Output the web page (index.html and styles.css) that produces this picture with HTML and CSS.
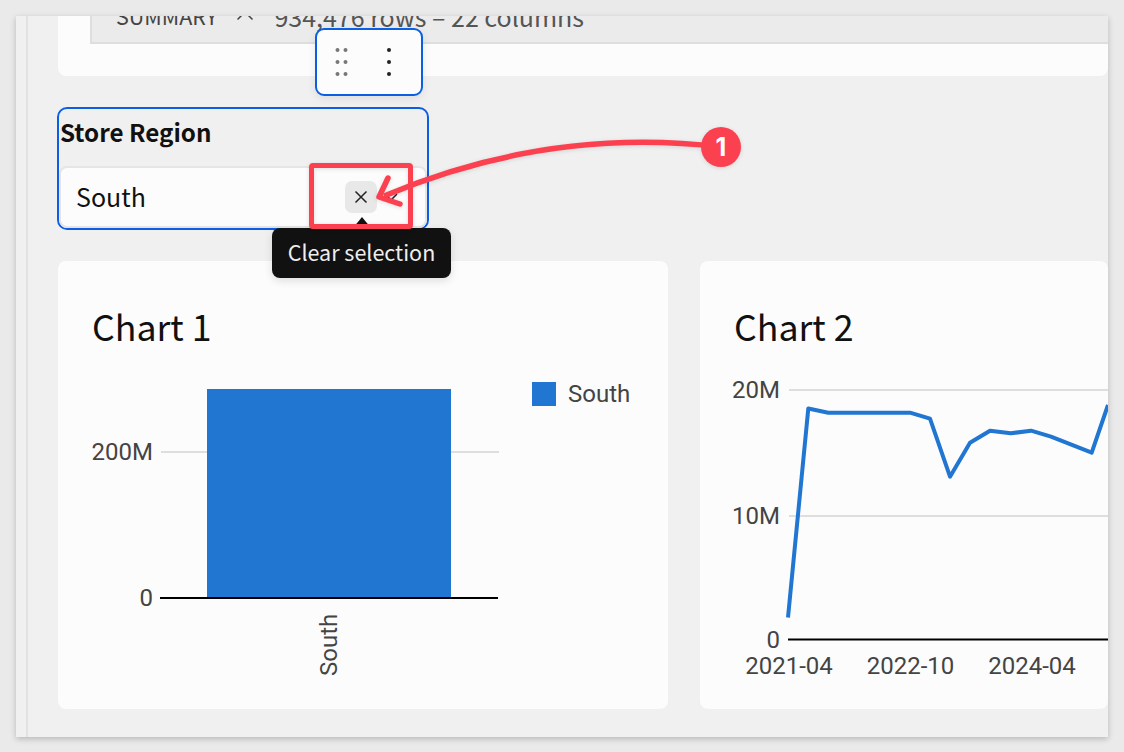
FILE: index.html
```html
<!DOCTYPE html>
<html lang="en">
<head>
<meta charset="utf-8">
<title>Store Region</title>
<link rel="stylesheet" href="styles.css">
</head>
<body>
<div class="window">
  <div class="rail"></div>
  <main class="content">
    <section class="table-card">
      <div class="table-foot">
        <span class="foot-name">SUMMARY</span>
        <svg class="foot-icon" width="16" height="10" viewBox="0 0 16 10"><path d="M0.500 8.500 8 1 15.500 8.500" fill="none" stroke="#444" stroke-width="1.500"/></svg>
        <span class="foot-info">934,476 rows – 22 columns</span>
      </div>
    </section>

    <section class="filter">
      <div class="filter-label">Store Region</div>
      <div class="filter-input">
        <span class="filter-value">South</span>
        <span class="clear-btn">
          <svg width="14" height="14" viewBox="0 0 14 14"><path d="M1.500 1.500 12.500 12.500 M12.500 1.500 1.500 12.500" fill="none" stroke="#222" stroke-width="1.500"/></svg>
        </span>
        <svg class="chevron" width="14" height="8" viewBox="0 0 14 8"><path d="M1 1 7 7 13 1" fill="none" stroke="#222" stroke-width="1.500"/></svg>
      </div>
    </section>

    <section class="charts">
      <article class="chart-card chart-one">
        <h2 class="chart-title">Chart 1</h2>
        <svg class="chart-svg" viewBox="58 353 610 356" preserveAspectRatio="xMinYMin slice">
          <line class="grid" x1="161" y1="452" x2="499" y2="452"/>
          <rect class="bar" x="207" y="389" width="244" height="209"/>
          <line class="axis" x1="160" y1="598" x2="498" y2="598"/>
          <text class="tick end" x="153" y="460">200M</text>
          <text class="tick end" x="153" y="606">0</text>
          <text class="tick" transform="translate(337 676) rotate(-90)">South</text>
          <rect class="bar" x="532" y="382" width="24" height="24"/>
          <text class="tick" x="568" y="402">South</text>
        </svg>
      </article>
      <article class="chart-card chart-two">
        <h2 class="chart-title">Chart 2</h2>
        <svg class="chart-svg" viewBox="700 353 408 356" preserveAspectRatio="xMinYMin slice">
          <line class="grid" x1="789" y1="390" x2="1108" y2="390"/>
          <line class="grid" x1="789" y1="516" x2="1108" y2="516"/>
          <line class="axis" x1="788" y1="639.500" x2="1108" y2="639.500"/>
          <text class="tick end" x="780" y="398">20M</text>
          <text class="tick end" x="780" y="524">10M</text>
          <text class="tick end" x="780" y="648">0</text>
          <text class="tick mid" x="789" y="674">2021-04</text>
          <text class="tick mid" x="910.500" y="674">2022-10</text>
          <text class="tick mid" x="1032" y="674">2024-04</text>
          <polyline class="trend" points="788,617.500 808.300,408.500 828.300,412.700 910,412.700 930,418.700 950,476.700 970,442.700 990,430.700 1010.700,433.300 1031,430.700 1051,436.700 1091.700,452.700 1108,405"/>
        </svg>
      </article>
    </section>
  </main>
</div>

<div class="toolbar">
  <svg class="grip" width="14" height="30" viewBox="0 0 14 30"><g fill="#777"><circle cx="2.500" cy="3" r="2"/><circle cx="10.500" cy="3" r="2"/><circle cx="2.500" cy="15" r="2"/><circle cx="10.500" cy="15" r="2"/><circle cx="2.500" cy="27" r="2"/><circle cx="10.500" cy="27" r="2"/></g></svg>
  <svg class="kebab" width="6" height="30" viewBox="0 0 6 30"><g fill="#222"><circle cx="3" cy="3" r="2"/><circle cx="3" cy="15" r="2"/><circle cx="3" cy="27" r="2"/></g></svg>
</div>

<div class="tooltip">Clear selection</div>

<svg class="annotation" width="1124" height="752" viewBox="0 0 1124 752">
  <g class="marks">
    <path class="arrow" d="M721 147C620 135 505 145 384 196" fill="none"/>
    <path class="arrow" d="M388 178 379 197 400 204" fill="none" stroke-linecap="round" stroke-linejoin="round"/>
    <rect x="311.500" y="165.500" width="99" height="61" rx="1.500" fill="none"/>
    <circle cx="721" cy="147" r="20" class="badge"/>
  </g>
  <text class="badge-num" x="721" y="156">1</text>
</svg>
</body>
</html>
```
FILE: styles.css
```css
* { box-sizing: border-box; }
html, body { margin: 0; height: 100%; }
body {
  background: #eaeaea;
  padding: 16px 16px 15px;
  overflow: hidden;
  font-family: "Noto Sans CJK JP", "Noto Sans", sans-serif;
}
.window {
  display: flex;
  height: 721px;
  width: 1092px;
  background: #f0f0f0;
  box-shadow: 0 2px 6px rgba(0, 0, 0, .22);
  overflow: hidden;
}
.rail {
  flex: 0 0 12px;
  border-right: 2px solid #e2e2e2;
}
.content {
  flex: 1;
  min-width: 0;
  display: flex;
  flex-direction: column;
  padding-left: 30px;
}
.table-card {
  height: 60px;
  background: #fcfcfc;
  border-radius: 0 0 8px 8px;
  padding-left: 32px;
}
.table-foot {
  height: 28px;
  display: flex;
  align-items: flex-end;
  padding: 0 0 11px 24px;
  background: #ebebeb;
  border-left: 2px solid #dedede;
  border-bottom: 2px solid #dedede;
  color: #555;
  font-size: 21.5px;
  line-height: 30px;
  white-space: nowrap;
}
.foot-name { color: #444; }
.foot-icon { margin: 0 21px 10px 20px; }
.foot-info { font-size: 25px; }
.filter {
  margin: 31px 0 0 -1px;
  width: 372px;
  height: 123px;
  border: 2px solid #0b5fe3;
  border-radius: 10px;
  display: flex;
  flex-direction: column;
}
.filter-label {
  height: 57px;
  padding: 6px 0 0 1px;
  font-size: 24.2px;
  line-height: 34px;
  font-weight: 700;
  color: #111;
}
.filter-input {
  flex: 1;
  display: flex;
  align-items: center;
  background: #fcfcfc;
  border: 2px solid #e5e5e5;
  border-radius: 8px;
  padding: 0 27px 0 15px;
}
.filter-value {
  flex: 1;
  font-size: 25px;
  line-height: 34px;
  margin-top: -2px;
  color: #111;
}
.clear-btn {
  width: 32px;
  height: 32px;
  display: flex;
  align-items: center;
  justify-content: center;
  background: #e8e8e8;
  border-radius: 7px;
}
.chevron { margin-left: 7px; }
.charts {
  margin-top: 31px;
  height: 448px;
  display: flex;
  gap: 32px;
}
.chart-card {
  display: flex;
  flex-direction: column;
  background: #fcfcfc;
  border-radius: 8px;
  overflow: hidden;
}
.chart-one { flex: 0 0 610px; }
.chart-two { flex: 1; min-width: 0; }
.chart-title {
  margin: 0;
  padding: 40px 0 2px 34px;
  font-size: 35.7px;
  line-height: 50px;
  font-weight: 400;
  color: #111;
}
.chart-svg { display: block; width: 100%; height: 356px; }
.grid { stroke: #dedede; stroke-width: 2; }
.axis { stroke: #000; stroke-width: 2; }
.bar { fill: #2176d2; }
.tick { font-family: Roboto, sans-serif; font-size: 24px; fill: #444; }
.end { text-anchor: end; }
.mid { text-anchor: middle; }
.trend { fill: none; stroke: #2176d2; stroke-width: 4; stroke-linejoin: round; }
.toolbar {
  position: absolute;
  left: 315px;
  top: 28px;
  width: 108px;
  height: 68px;
  display: flex;
  align-items: center;
  gap: 37px;
  padding-left: 18px;
  background: #fcfcfc;
  border: 2px solid #0b5fe3;
  border-radius: 9px;
  box-shadow: 0 3px 10px rgba(0, 0, 0, .08);
}
.tooltip {
  position: absolute;
  left: 272px;
  top: 228px;
  width: 179px;
  height: 50px;
  padding-bottom: 4px;
  display: flex;
  align-items: center;
  justify-content: center;
  background: #111;
  color: #eee;
  border-radius: 8px;
  font-size: 21.5px;
  box-shadow: 0 3px 8px rgba(0, 0, 0, .12);
}
.tooltip::before {
  content: "";
  position: absolute;
  left: 81px;
  top: -11px;
  border: 9px solid transparent;
  border-top: 0;
  border-bottom: 11px solid #111;
}
.annotation { position: absolute; left: 0; top: 0; pointer-events: none; }
.marks { stroke: #fb404f; stroke-width: 5; filter: drop-shadow(0 1px 2px rgba(0, 0, 0, .12)); }
.arrow { stroke-width: 5.5; }
.badge { fill: #fb404f; stroke: none; }
.badge-num {
  font-family: Inter, sans-serif;
  font-size: 25px;
  font-weight: 700;
  fill: #fff;
  text-anchor: middle;
}
```
